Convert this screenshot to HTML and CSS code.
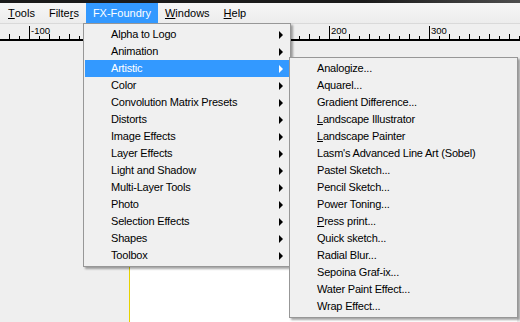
FILE: index.html
```html
<!DOCTYPE html>
<html>
<head>
<meta charset="utf-8">
<link rel="stylesheet" href="styles.css">
</head>
<body>
<div class="app">
  <div class="titlebar"></div>
  <nav class="menubar">
    <span class="mb-item"><u>T</u>ools</span>
    <span class="mb-item">Filte<u>r</u>s</span>
    <span class="mb-item active">FX-Foundry</span>
    <span class="mb-item"><u>W</u>indows</span>
    <span class="mb-item"><u>H</u>elp</span>
  </nav>
  <div class="ruler">
    <svg class="ruler-svg" width="520" height="17" viewBox="0 0 520 17">
      <defs>
        <pattern id="ticks" patternUnits="userSpaceOnUse" x="129" y="0" width="20" height="17">
          <rect x="0" y="10" width="1" height="5" fill="#000"/>
          <rect x="10" y="12" width="1" height="3" fill="#000"/>
        </pattern>
      </defs>
      <rect x="0" y="0" width="520" height="15" fill="url(#ticks)"/>
      <rect x="0" y="15" width="520" height="2" fill="#000"/>
      <rect x="29" y="2" width="1" height="13" fill="#000"/>
      <rect x="329" y="2" width="1" height="13" fill="#000"/>
      <rect x="429" y="2" width="1" height="13" fill="#000"/>
      <text x="31" y="10" class="ruler-label">-100</text>
      <text x="331" y="10" class="ruler-label">200</text>
      <text x="431" y="10" class="ruler-label">300</text>
    </svg>
  </div>
  <div class="workspace">
    <div class="canvas"></div>
  </div>

  <div class="menu main-menu">
    <div class="item sub">Alpha to Logo</div>
    <div class="item sub">Animation</div>
    <div class="item sub hl">Artistic</div>
    <div class="item sub">Color</div>
    <div class="item sub">Convolution Matrix Presets</div>
    <div class="item sub">Distorts</div>
    <div class="item sub">Image Effects</div>
    <div class="item sub">Layer Effects</div>
    <div class="item sub">Light and Shadow</div>
    <div class="item sub">Multi-Layer Tools</div>
    <div class="item sub">Photo</div>
    <div class="item sub">Selection Effects</div>
    <div class="item sub">Shapes</div>
    <div class="item sub">Toolbox</div>
  </div>

  <div class="menu sub-menu">
    <div class="item">Analogize...</div>
    <div class="item">Aquarel...</div>
    <div class="item">Gradient Difference...</div>
    <div class="item"><u>L</u>andscape Illustrator</div>
    <div class="item"><u>L</u>andscape Painter</div>
    <div class="item">Lasm's Advanced Line Art (Sobel)</div>
    <div class="item">Pastel Sketch...</div>
    <div class="item">Pencil Sketch...</div>
    <div class="item">Power Toning...</div>
    <div class="item"><u>P</u>ress print...</div>
    <div class="item">Quick sketch...</div>
    <div class="item">Radial Blur...</div>
    <div class="item">Sepoina Graf-ix...</div>
    <div class="item">Water Paint Effect...</div>
    <div class="item">Wrap Effect...</div>
  </div>
</div>
</body>
</html>
```

FILE: styles.css
```css
html, body {
  margin: 0;
  padding: 0;
}
body {
  width: 520px;
  height: 322px;
  overflow: hidden;
  background: #efefef;
  font-family: "Liberation Sans", Arial, sans-serif;
  font-size: 11px;
  color: #000;
}
.app {
  position: relative;
  width: 520px;
  height: 322px;
  display: flex;
  flex-direction: column;
}
.titlebar {
  height: 3px;
  flex: none;
  background: linear-gradient(90deg, #1b1b1b 0%, #1b1b1b 70%, #4d4d4d 100%);
}
.menubar {
  height: 20px;
  flex: none;
  display: flex;
  align-items: stretch;
  padding-left: 1px;
  background: linear-gradient(#f6f6f6, #ececec);
  border-bottom: 1px solid #d9d9d9;
}
.mb-item {
  display: flex;
  align-items: center;
  padding: 0 7px;
  line-height: 20px;
}
.mb-item.active {
  background: #3399ff;
  color: #fff;
}
.ruler {
  height: 17px;
  flex: none;
}
.ruler-svg {
  display: block;
}
.ruler-label {
  font-family: "Liberation Sans", Arial, sans-serif;
  font-size: 9.5px;
  fill: #000;
}
.workspace {
  flex: 1;
  min-height: 0;
  display: flex;
  flex-direction: column;
  background: #efefef;
  padding: 20px 3px 0 129px;
}
.canvas {
  flex: 1;
  background: #fff;
  border-left: 1px solid #e6d200;
}
.menu {
  position: absolute;
  box-sizing: border-box;
  background: #f0f0f0;
  border: 1px solid #979797;
  padding: 2px 1px;
  box-shadow: 2px 2px 2px rgba(0, 0, 0, 0.35);
}
.main-menu {
  left: 83px;
  top: 23px;
  width: 208px;
}
.sub-menu {
  left: 289px;
  top: 57px;
  width: 229px;
}
.item {
  position: relative;
  height: 17px;
  line-height: 17px;
  padding-left: 26px;
  white-space: nowrap;
  letter-spacing: -0.2px;
}
.item.sub::after {
  content: "";
  position: absolute;
  right: 6px;
  top: 5px;
  border-style: solid;
  border-width: 4px 0 4px 4px;
  border-color: transparent transparent transparent #000;
}
.item.hl {
  background: #3399ff;
  color: #fff;
}
.item.hl::after {
  border-left-color: #fff;
}
```
